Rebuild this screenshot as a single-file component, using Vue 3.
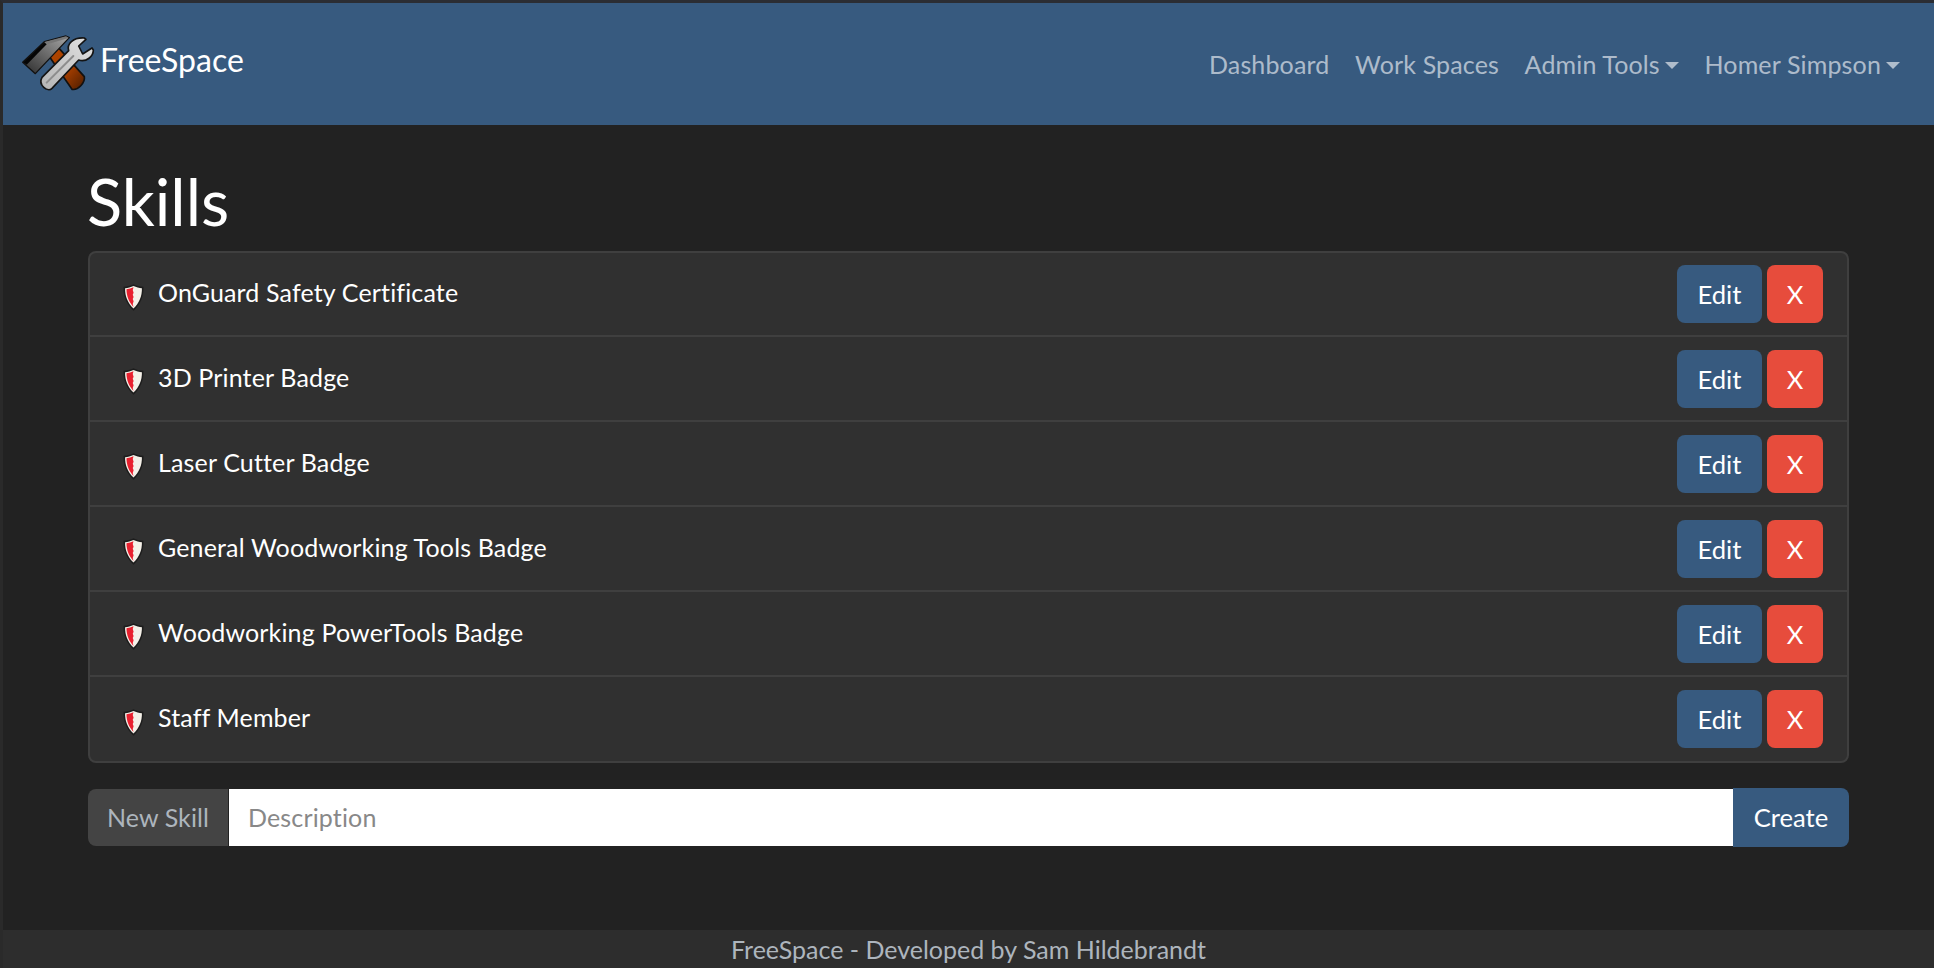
<script setup>
const skills = [
  'OnGuard Safety Certificate',
  '3D Printer Badge',
  'Laser Cutter Badge',
  'General Woodworking Tools Badge',
  'Woodworking PowerTools Badge',
  'Staff Member'
]
</script>

<template>
  <div class="page">
    <span class="edge-strip"></span>
    <nav class="navbar">
      <a class="brand">
        <svg class="logo" viewBox="0 0 252 198" width="84" height="66">
          <defs>
            <linearGradient id="wood" x1="0" y1="0" x2="1" y2="1">
              <stop offset="0" stop-color="#b84a00" />
              <stop offset="0.6" stop-color="#a03c00" />
              <stop offset="1" stop-color="#4a1c00" />
            </linearGradient>
            <linearGradient id="steel" x1="0" y1="1" x2="1" y2="0">
              <stop offset="0" stop-color="#2a2a2a" />
              <stop offset="1" stop-color="#a8a8a8" />
            </linearGradient>
            <linearGradient id="wrench" x1="0" y1="1" x2="1" y2="0">
              <stop offset="0" stop-color="#b4b4b4" />
              <stop offset="1" stop-color="#e2e2e2" />
            </linearGradient>
          </defs>
          <path d="M88 62 L116 40 L205 140 C208 158 186 182 168 178 Z" fill="url(#wood)" stroke="#111" stroke-width="5" stroke-linejoin="round" />
          <path d="M20 97 L85 35 L150 18 L160 23 L58 131 Z" fill="url(#steel)" stroke="#111" stroke-width="4" stroke-linejoin="round" />
          <path d="M22 97 L85 37 L92 43 L32 104 Z" fill="#050505" />
          <path d="M85 36 L150 19 L158 24 L96 42 Z" fill="#777" />
          <path d="M78 142 L158 62 C152 42 170 22 205 24 L210 28 L188 48 L200 72 L228 54 L232 60 C232 78 212 98 188 90 L108 175 C95 188 65 165 78 142 Z" fill="url(#wrench)" stroke="#141414" stroke-width="5" stroke-linejoin="round" />
          <path d="M92 158 L172 78" stroke="#8d8d8d" stroke-width="6" stroke-linecap="round" />
        </svg>
        <span class="brand-name">FreeSpace</span>
      </a>
      <ul class="nav">
        <li>Dashboard</li>
        <li>Work Spaces</li>
        <li class="caret">Admin Tools</li>
        <li class="caret">Homer Simpson</li>
      </ul>
    </nav>

    <main class="content">
      <h1>Skills</h1>
      <ul class="list">
        <li v-for="s in skills" :key="s" class="row">
          <div class="label">
            <svg class="shield" viewBox="0 0 19 25" width="21" height="27">
              <path d="M9.5 .3C12 1.5 15.5 2.4 18.7 2.6C19.2 11 16 19 9.5 24.8C3 19 -.2 11 .3 2.6C3.5 2.4 7 1.5 9.5 .3Z" fill="#1d1d1d" />
              <path d="M9.5 1.9C12 3 14.8 3.7 17.3 4C17.5 11 14.8 18 9.5 22.8C4.2 18 1.5 11 1.7 4C4.2 3.7 7 3 9.5 1.9Z" fill="#f4f0e8" />
              <path d="M9.5 3C7.5 3.9 5.3 4.5 3 4.9C3 11 5.2 16.8 9.5 21.3L8.8 18.5L9.6 16L8.8 14L9.6 12L8.8 10L9.6 8L8.8 5.5Z" fill="#e8202f" />
            </svg>
            <span class="name">{{ s }}</span>
          </div>
          <div class="actions">
            <button class="btn edit">Edit</button>
            <button class="btn del">X</button>
          </div>
        </li>
      </ul>
      <div class="group">
        <span class="prefix">New Skill</span>
        <input class="field" placeholder="Description" />
        <button class="create">Create</button>
      </div>
    </main>

    <footer class="footer">FreeSpace - Developed by Sam Hildebrandt</footer>
  </div>
</template>

<style>
html, body { margin: 0; background: #222; }
</style>

<style scoped>
.page {
  position: relative;
  box-sizing: border-box;
  height: 968px;
  border-top: 3px solid #2b2d33;
  border-left: 3px solid #2a2a2a;
  background: #222;
  display: flex;
  flex-direction: column;
  font-family: Lato, "Noto Sans", sans-serif;
  font-size: 25px;
  color: #fff;
  overflow: hidden;
}
.edge-strip {
  position: absolute;
  left: -3px;
  top: 825px;
  width: 2px;
  height: 44px;
  background: #34343e;
}
.navbar {
  height: 122px;
  flex: none;
  background: #375a7f;
  display: flex;
  align-items: flex-start;
  justify-content: space-between;
  padding: 0 34px 0 13px;
  box-sizing: border-box;
}
.brand {
  display: flex;
  align-items: flex-start;
  margin-top: 27px;
  color: #fff;
}
.brand-name {
  font-size: 32px;
  line-height: 59px;
}
.logo { flex: none; }
.nav {
  list-style: none;
  margin: 43px 0 0;
  padding: 0;
  display: flex;
  gap: 25.6px;
  color: rgba(255, 255, 255, 0.6);
  line-height: 36px;
  letter-spacing: 0.15px;
}
.caret::after {
  content: "";
  display: inline-block;
  margin-left: 5px;
  vertical-align: 5px;
  border-top: 7px solid;
  border-left: 7.5px solid transparent;
  border-right: 7.5px solid transparent;
}
.content {
  flex: 1;
  padding: 0 85px;
}
h1 {
  margin: 38px 0 0 -1px;
  font-size: 65px;
  font-weight: 400;
  line-height: 76px;
}
.list {
  list-style: none;
  margin: 12px 0 0;
  padding: 0;
  background: #303030;
  border: 2px solid #3f3f3f;
  border-radius: 8px;
}
.row {
  display: flex;
  align-items: center;
  justify-content: space-between;
  height: 83px;
  padding: 0 24px 0 32px;
  border-bottom: 2px solid #3f3f3f;
}
.row:first-child { height: 82px; }
.row:last-child { border-bottom: 0; height: 84px; }
.label { display: flex; align-items: center; gap: 14px; }
.name { margin-bottom: 4px; letter-spacing: 0.15px; }
.shield { margin: 6px 0 0 1px; flex: none; }
.actions { display: flex; gap: 5px; }
.btn {
  height: 58px;
  border: 0;
  border-radius: 8px;
  color: #fff;
  font: inherit;
  font-size: 25.6px;
  padding: 0;
}
.edit { background: #375a7f; width: 85px; }
.del { background: #e74c3c; width: 56px; }
.group {
  display: flex;
  margin-top: 25px;
  height: 59px;
}
.prefix {
  box-sizing: border-box;
  width: 141px;
  height: 57px;
  margin-top: 1px;
  padding-bottom: 2px;
  display: flex;
  align-items: center;
  justify-content: center;
  background: #444;
  color: #adb5bd;
  border-radius: 8px 0 0 8px;
  border-right: 1px solid #222;
  letter-spacing: 0.1px;
}
.field {
  box-sizing: border-box;
  flex: 1;
  min-width: 0;
  height: 57px;
  margin-top: 1px;
  border: 0;
  outline: 0;
  padding: 0 19px 2px;
  background: #fff;
  font: inherit;
  letter-spacing: 0.15px;
  color: #444;
}
.field::placeholder { color: #888; opacity: 1; }
.create {
  width: 116px;
  border: 0;
  padding: 0 0 2px;
  background: #375a7f;
  color: #fff;
  font: inherit;
  font-size: 25.6px;
  border-radius: 0 8px 8px 0;
}
.footer {
  height: 38px;
  flex: none;
  background: #2d2d2d;
  text-align: center;
  color: #adb5bd;
  line-height: 38px;
}
</style>
